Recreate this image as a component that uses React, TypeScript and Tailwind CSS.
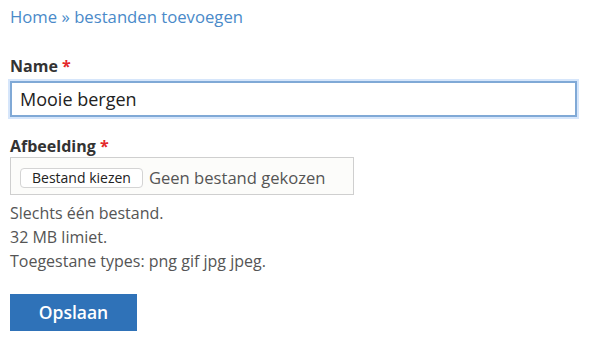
export default function App() {
  return (
    <div className="min-h-[348px] w-[600px] bg-white px-[10px] pt-[5px] font-['Open_Sans',sans-serif] text-[#333]">
      <nav className="text-[16.7px] leading-[24px] text-[#4a8ac9]">
        <a href="#">Home</a> » <a href="#">bestanden toevoegen</a>
      </nav>

      <div className="mt-[26px]">
        <label className="block text-[16px] font-bold leading-[22px] text-[#333]">
          Name <span className="text-[#e4292a]">*</span>
        </label>
        <div className="-ml-[2px] mt-[2px] w-[571px] bg-[#d6e6fb] p-[2px]">
          <input
            readOnly
            value="Mooie bergen"
            className="block h-[36px] w-full border-2 border-[#80a9d6] bg-white px-[8px] text-[18px] text-[#222] outline-none"
          />
        </div>
      </div>

      <div className="mt-[16px]">
        <label className="block text-[16px] font-bold leading-[22px] text-[#333]">
          Afbeelding <span className="text-[#e4292a]">*</span>
        </label>
        <div className="flex h-[38px] w-[344px] items-center border border-[#cfcfcf] bg-[#fcfcfa] pl-[9px] pt-[3px]">
          <span className="rounded-[4px] border border-[#d4d4d4] bg-white px-[11px] text-[14px] leading-[18px] text-[#222]">
            Bestand kiezen
          </span>
          <span className="ml-[6px] text-[16.6px] leading-[22px] text-[#555]">Geen bestand gekozen</span>
        </div>
        <div className="mt-[6px] text-[16px] leading-[24px] text-[#555]">
          <p>Slechts één bestand.</p>
          <p>32 MB limiet.</p>
          <p>Toegestane types: png gif jpg jpeg.</p>
        </div>
      </div>

      <button className="mt-[21px] h-[37px] w-[127px] bg-[#2f72b8] text-[17.5px] font-semibold text-white">
        Opslaan
      </button>
    </div>
  );
}
